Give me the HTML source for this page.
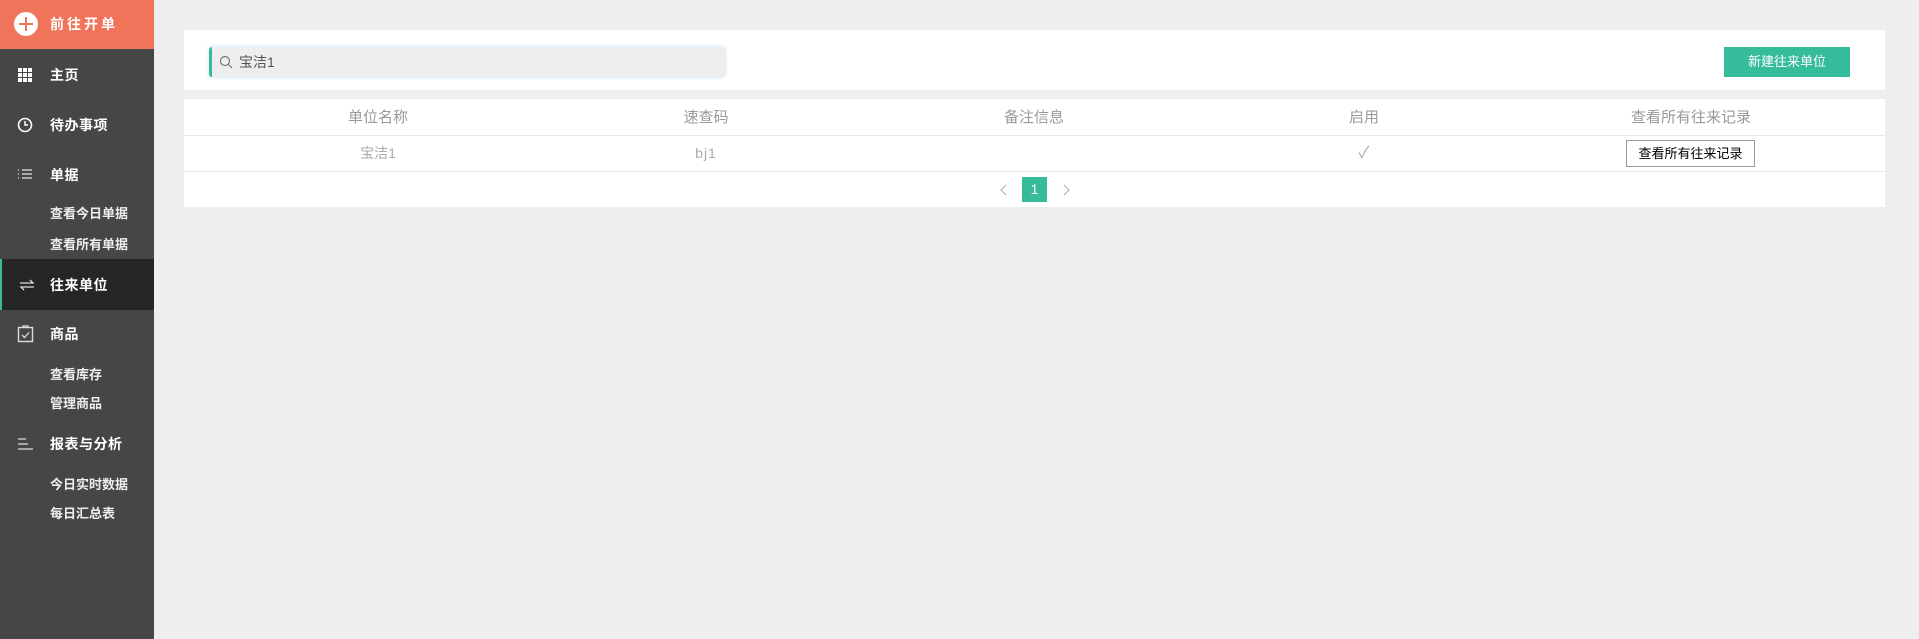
<!DOCTYPE html>
<html><head><meta charset="utf-8"><style>
*{margin:0;padding:0;box-sizing:border-box}
body{width:1919px;height:639px;background:#eeeeee;font-family:"Liberation Sans","Noto Sans CJK SC",sans-serif;position:relative;overflow:hidden}
#side{position:absolute;left:0;top:0;width:154px;height:639px;background:#464646}
.top{position:absolute;left:0;top:0;width:154px;height:49px;background:#f0745a}
.it{position:absolute;left:50px;color:#fff;font-weight:bold;font-size:14px;line-height:20px;letter-spacing:.5px}
.sub{position:absolute;left:50px;color:#eee;font-weight:bold;font-size:13px;line-height:20px}
.ic{position:absolute;left:17px}
.card{position:absolute;left:184px;width:1701px;background:#fff}
.th{position:absolute;top:0;height:37px;line-height:37px;font-size:15px;color:#999;transform:translateX(-50%)}
.td{position:absolute;top:37px;height:35px;line-height:35px;font-size:14px;color:#aaa;transform:translateX(-50%)}
</style></head><body>
<div id="side">
<div class="top"><svg style="position:absolute;left:14px;top:12px" width="24" height="24"><circle cx="12" cy="12" r="12" fill="#fff"/><path d="M12 5v14M5 12h14" stroke="#f0745a" stroke-width="2"/></svg>
<div class="it" style="top:14px;letter-spacing:3px">前往开单</div></div>
<svg class="ic" style="top:67px" width="16" height="16" fill="#fff"><rect x="1" y="1" width="4" height="4"/><rect x="6" y="1" width="4" height="4"/><rect x="11" y="1" width="4" height="4"/><rect x="1" y="6" width="4" height="4"/><rect x="6" y="6" width="4" height="4"/><rect x="11" y="6" width="4" height="4"/><rect x="1" y="11" width="4" height="4"/><rect x="6" y="11" width="4" height="4"/><rect x="11" y="11" width="4" height="4"/></svg>
<div class="it" style="top:65px">主页</div>
<svg class="ic" style="top:117px" width="16" height="16"><circle cx="8" cy="8" r="6.5" stroke="#fff" stroke-width="1.6" fill="none"/><path d="M8 4v4h3" stroke="#fff" stroke-width="1.5" fill="none"/></svg>
<div class="it" style="top:115px">待办事项</div>
<svg class="ic" style="top:168px" width="16" height="14" stroke="#ccc"><path d="M1 2h1M1 6h1M1 10h1M5 2h10M5 6h10M5 10h10" stroke-width="1.5"/></svg>
<div class="it" style="top:165px">单据</div>
<div class="sub" style="top:204px">查看今日单据</div>
<div class="sub" style="top:235px">查看所有单据</div>
<div style="position:absolute;left:0;top:259px;width:154px;height:51px;background:#262626;border-left:2px solid #36bc9b"></div>
<svg class="ic" style="top:279px;left:19px" width="16" height="12" stroke="#ddd" fill="none"><path d="M1 4h13l-3-3M15 8H2l3 3" stroke-width="1.3"/></svg>
<div class="it" style="top:275px">往来单位</div>
<svg class="ic" style="top:325px" width="17" height="18" stroke="#ddd" fill="none"><rect x="1.5" y="2.5" width="14" height="14" stroke-width="1.4"/><path d="M6 2.5v-1.5h5v1.5M5 10l2.5 2.5 4.5-5" stroke-width="1.3"/></svg>
<div class="it" style="top:324px">商品</div>
<div class="sub" style="top:365px">查看库存</div>
<div class="sub" style="top:394px">管理商品</div>
<svg class="ic" style="top:437px" width="17" height="14" stroke="#ddd"><path d="M1 2h8M1 7h10M1 12h15" stroke-width="1.3"/></svg>
<div class="it" style="top:434px">报表与分析</div>
<div class="sub" style="top:475px">今日实时数据</div>
<div class="sub" style="top:504px">每日汇总表</div>
</div>
<div class="card" style="top:30px;height:60px">
<div style="position:absolute;left:25px;top:17px;width:516px;height:30px;background:#eee;border-left:3px solid #36bc9b;border-radius:3px;box-shadow:0 0 4px #bfe0f8">
<svg style="position:absolute;left:7px;top:8px" width="14" height="14" stroke="#777" fill="none"><circle cx="6" cy="6" r="4.5" stroke-width="1.2"/><path d="M9.5 9.5l3.5 3.5" stroke-width="1.2"/></svg>
<div style="position:absolute;left:27px;top:0;line-height:30px;font-size:14px;color:#555">宝洁1</div></div>
<div style="position:absolute;left:1540px;top:17px;width:126px;height:30px;background:#36bc9b;color:#fff;font-size:13px;line-height:30px;text-align:center">新建往来单位</div>
</div>
<div class="card" style="top:99px;height:108px">
<div style="position:absolute;left:0;top:36px;width:100%;height:1px;background:#e8e8e8"></div>
<div style="position:absolute;left:0;top:72px;width:100%;height:1px;background:#e8e8e8"></div>
<div class="th" style="left:194px">单位名称</div>
<div class="th" style="left:522px">速查码</div>
<div class="th" style="left:850px">备注信息</div>
<div class="th" style="left:1180px">启用</div>
<div class="th" style="left:1507px">查看所有往来记录</div>
<div class="td" style="left:194px">宝洁1</div>
<div class="td" style="left:522px;letter-spacing:1px">bj1</div>
<div class="td" style="left:1180px;font-size:16px">✓</div>
<div style="position:absolute;left:1442px;top:41px;width:129px;height:27px;border:1px solid #999;font-size:13px;line-height:25px;text-align:center;color:#000">查看所有往来记录</div>
<svg style="position:absolute;left:815px;top:85px" width="10" height="12" stroke="#aaa" fill="none"><path d="M7 1L2 6l5 5"/></svg>
<div style="position:absolute;left:838px;top:78px;width:25px;height:25px;background:#36bc9b;color:#fff;font-size:14px;line-height:25px;text-align:center">1</div>
<svg style="position:absolute;left:877px;top:85px" width="10" height="12" stroke="#aaa" fill="none"><path d="M3 1l5 5-5 5"/></svg>
</div>
</body></html>
